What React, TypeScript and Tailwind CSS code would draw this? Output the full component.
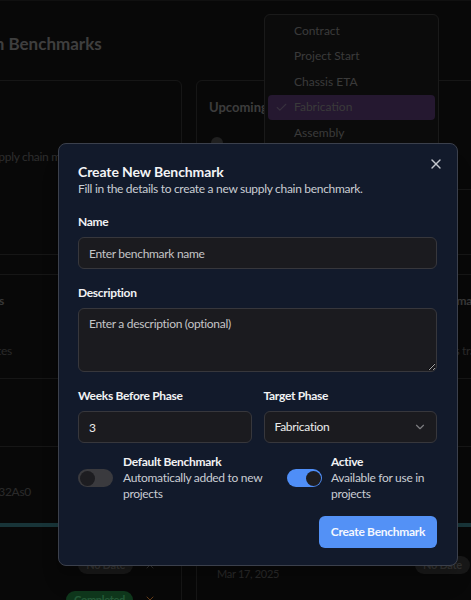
import type { ReactNode } from 'react'
import { Check, ChevronDown, X } from 'lucide-react'

const phases = ['Contract', 'Project Start', 'Chassis ETA', 'Fabrication', 'Assembly']

function Toggle({ on }: { on: boolean }) {
    return (
        <button
            type="button"
            role="switch"
            aria-checked={on}
            className={`flex h-[18px] w-[35px] shrink-0 items-center rounded-full px-[1.5px] ${on ? 'justify-end bg-[#4f8ef7]' : 'justify-start bg-[#3a3a3e]'}`}
        >
            <span className="h-[15px] w-[15px] rounded-full bg-[#1d1d21]" />
        </button>
    )
}

function Field({ label, children }: { label: string; children: ReactNode }) {
    return (
        <div className="flex flex-col gap-[7px]">
            <label className="text-[12px] font-bold leading-4 text-[#f1f2f4]">{label}</label>
            {children}
        </div>
    )
}

const inputClass =
    'h-8 w-full rounded-md border border-[#37373c] bg-[#1b1b1f] px-[10px] text-[12px] text-[#ececec] placeholder:text-[#c5c5c7] outline-none'

export default function App() {
    return (
        <div className="relative h-[600px] w-[471px] overflow-hidden bg-[#161616] font-['Lato',sans-serif] text-[12px] leading-4 tracking-[-0.3px]">
            {/* Page behind the modal */}
            <div className="h-px bg-[#2a2a2a]" />
            <h1 className="ml-[-94px] whitespace-nowrap pt-8 text-[17px] font-bold leading-[22px] tracking-normal text-[#9b9b9b]">
                Supply Chain Benchmarks
            </h1>

            <div className="ml-[-17px] mt-[25px] flex gap-[14px]">
                {/* Left card */}
                <div className="h-[560px] w-[199px] shrink-0 rounded-md border border-[#373737] pl-4">
                    <div className="h-[173px] pt-[68px]">
                        <p className="ml-[-13px] whitespace-nowrap text-[#707070]">supply chain management targets</p>
                    </div>
                    <div className="h-[20px] border-t border-[#373737]" />
                    <div className="h-[104px] border-t border-[#373737] pt-[18px]">
                        <p className="ml-[-60px] w-[64px] whitespace-nowrap text-right font-bold text-[#8a8a8a]">Materials</p>
                        <p className="ml-[-60px] mt-[34px] w-[72px] whitespace-nowrap text-right text-[#666666]">Key dates</p>
                    </div>
                    <div className="h-[68px] border-t border-[#373737]" />
                    <div className="h-[77px] border-t border-[#373737] pt-[37px]">
                        <p className="ml-[-80px] w-[111px] whitespace-nowrap text-right text-[#6a6a6a]">cm8kq0232As0</p>
                    </div>
                    <div className="-ml-4 h-[4px] bg-[#3c828c]" />
                    <div className="flex flex-col gap-[17px] pr-[25px] pt-[29px]">
                        <div className="flex items-center justify-end gap-[11px]">
                            <span className="flex h-[18px] items-center rounded-full bg-[#3c3c3c] px-2 text-[11px] font-bold text-[#7a7a7a]">No Date</span>
                            <X size={12} className="text-[#707070]" />
                        </div>
                        <div className="flex items-center justify-end gap-[11px]">
                            <span className="flex h-[18px] items-center rounded-full bg-[#268a46] px-2 text-[11px] font-bold text-[#5fe08e]">Completed</span>
                            <X size={12} className="text-[#fa963e]" />
                        </div>
                    </div>
                </div>

                {/* Right card */}
                <div className="h-[560px] w-[330px] shrink-0 rounded-md border border-[#373737] pl-3">
                    <div className="h-[108px] pt-[18px]">
                        <p className="text-[13px] font-bold tracking-normal text-[#969696]">Upcoming</p>
                        <span className="ml-[2px] mt-[22px] block h-[12px] w-[12px] rounded-full bg-[#505050]" />
                    </div>
                    <div className="h-[65px] border-t border-[#373737]" />
                    <div className="h-[20px] border-t border-[#373737]" />
                    <div className="flex h-[104px] border-t border-[#373737] pt-[18px]">
                        <div className="w-[225px]" />
                        <div className="whitespace-nowrap">
                            <p className="font-bold text-[#8a8a8a]">Summary</p>
                            <p className="mt-[34px] text-[#666666]">Parts tracking</p>
                        </div>
                    </div>
                    <div className="h-[68px] border-t border-[#373737]" />
                    <div className="h-[77px] border-t border-[#373737]" />
                    <div className="-ml-3 h-[4px] bg-[#3c828c]" />
                    <div className="flex items-start pt-[29px]">
                        <p className="w-[206px] pl-2 pt-[10px] text-[11px] text-[#646464]">Mar 17, 2025</p>
                        <span className="flex h-[18px] items-center rounded-full bg-[#3c3c3c] px-2 text-[11px] font-bold text-[#7a7a7a]">No Date</span>
                    </div>
                </div>
            </div>

            {/* Open phase dropdown */}
            <div className="absolute left-[264px] top-[14px] h-[150px] w-[175px] rounded-md border border-[#414141] bg-[#1c1c1c] p-[3px]">
                {phases.map((phase) => (
                    <div
                        key={phase}
                        className={`flex h-[25.5px] items-center rounded-sm tracking-normal text-[#919191] ${phase === 'Fabrication' ? 'bg-[#5c3c78]' : ''}`}
                    >
                        <span className="flex w-[26px] justify-center">
                            {phase === 'Fabrication' && <Check size={13} className="text-[#8a7a9a]" />}
                        </span>
                        {phase}
                    </div>
                ))}
            </div>

            {/* Overlay */}
            <div className="absolute inset-0 bg-black/60" />

            {/* Dialog */}
            <div
                role="dialog"
                className="absolute left-[58px] top-[143px] w-[400px] rounded-lg border border-[#3b404c] bg-[#121a2b] pb-[17px] pl-[19px] pr-5 pt-5 shadow-xl"
            >
                <button type="button" className="absolute right-[13px] top-[12px] text-[#c3c7ce]">
                    <X size={16} />
                </button>
                <h2 className="text-[14px] font-bold leading-[15px] tracking-[-0.1px] text-[#f3f4f6]">Create New Benchmark</h2>
                <p className="mt-0.5 text-[#c9cdd3]">Fill in the details to create a new supply chain benchmark.</p>

                <div className="mt-[17px] flex flex-col gap-4">
                    <Field label="Name">
                        <input className={inputClass} placeholder="Enter benchmark name" />
                    </Field>
                    <Field label="Description">
                        <textarea
                            className="h-[64px] w-full rounded-md border border-[#37373c] bg-[#1b1b1f] px-[10px] py-[7px] text-[12px] leading-4 text-[#ececec] placeholder:text-[#c5c5c7] outline-none"
                            placeholder="Enter a description (optional)"
                        />
                    </Field>
                    <div className="grid grid-cols-2 gap-3">
                        <Field label="Weeks Before Phase">
                            <input className={inputClass} defaultValue="3" />
                        </Field>
                        <Field label="Target Phase">
                            <button
                                type="button"
                                className="flex h-8 w-full items-center justify-between rounded-md border border-[#37373c] bg-[#1b1b1f] pl-[10px] pr-[9px] text-[12px] text-[#ececec]"
                            >
                                Fabrication
                                <ChevronDown size={14} className="text-[#7d7d80]" />
                            </button>
                        </Field>
                    </div>
                </div>

                <div className="mt-[11px] flex">
                    <div className="flex w-[209px] items-center gap-[10px]">
                        <Toggle on={false} />
                        <div>
                            <p className="font-bold text-[#f1f2f4]">Default Benchmark</p>
                            <p className="pr-4 text-[#c9cdd3]">Automatically added to new projects</p>
                        </div>
                    </div>
                    <div className="flex flex-1 items-center gap-[9px]">
                        <Toggle on />
                        <div>
                            <p className="font-bold text-[#f1f2f4]">Active</p>
                            <p className="text-[#c9cdd3]">Available for use in projects</p>
                        </div>
                    </div>
                </div>

                <div className="mt-[14px] flex justify-end">
                    <button type="button" className="h-8 rounded-md bg-[#5391f6] px-3 text-[12px] font-bold text-[#f4f7ff]">
                        Create Benchmark
                    </button>
                </div>
            </div>
        </div>
    )
}
